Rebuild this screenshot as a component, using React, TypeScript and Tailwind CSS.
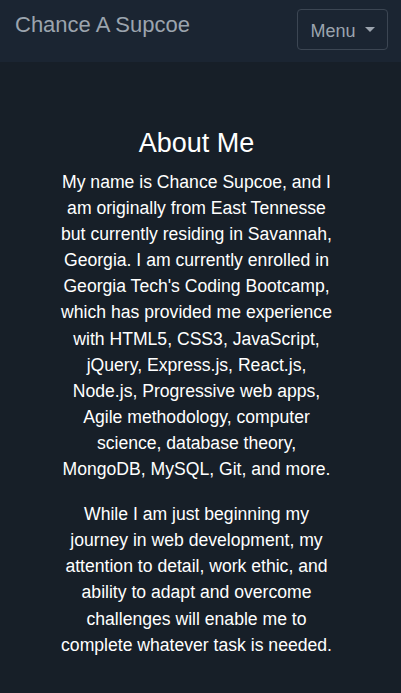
import React from 'react';

const paragraphs = [
  "My name is Chance Supcoe, and I am originally from East Tennesse but currently residing in Savannah, Georgia. I am currently enrolled in Georgia Tech's Coding Bootcamp, which has provided me experience with HTML5, CSS3, JavaScript, jQuery, Express.js, React.js, Node.js, Progressive web apps, Agile methodology, computer science, database theory, MongoDB, MySQL, Git, and more.",
  'While I am just beginning my journey in web development, my attention to detail, work ethic, and ability to adapt and overcome challenges will enable me to complete whatever task is needed.',
];

const App: React.FC = () => {
  return (
    <div className="min-h-[693px] bg-[#171f28] font-['Liberation_Sans',Arial,sans-serif]">
      <nav className="h-[62px] bg-[#1b2532] flex items-start justify-between pl-[15px] pr-[13px]">
        <a className="text-[22px] leading-[26px] mt-[12px] text-[#9ba4ae]">Chance A Supcoe</a>
        <button className="mt-[9px] w-[91px] h-[41px] border border-[#3c4653] rounded-[4px] flex items-center justify-center gap-[9px] text-[#9ba4ae]">
          <span className="text-[18px] leading-[22px] pt-[2px]">Menu</span>
          <span className="w-0 h-0 border-l-[5px] border-r-[5px] border-t-[5px] border-l-transparent border-r-transparent border-t-[#9ba4ae]" />
        </button>
      </nav>

      <main className="pt-[65px] pb-10 pr-[8px] flex flex-col items-center">
        <h2 className="text-[27px] leading-[32px] text-white mb-[10px]">About Me</h2>
        <div className="w-[287px] text-center text-white text-[17.6px] leading-[26.1px]">
          {paragraphs.map((p, i) => (
            <p key={i} className="mb-[19px]">{p}</p>
          ))}
        </div>
      </main>
    </div>
  );
};

export default App;
